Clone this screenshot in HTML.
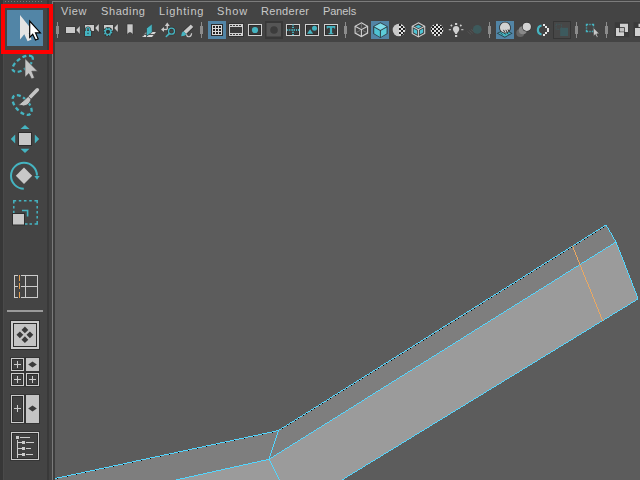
<!DOCTYPE html>
<html><head><meta charset="utf-8">
<style>
html,body{margin:0;padding:0;width:640px;height:480px;overflow:hidden;background:#444444;}
body{position:relative;font-family:"Liberation Sans",sans-serif;}
svg{position:absolute;left:0;top:0;}
.m{position:absolute;top:3px;font-size:11px;color:#c8c8c8;white-space:nowrap;line-height:16px;letter-spacing:0.6px;}
</style></head><body>
<svg width="640" height="480" viewBox="0 0 640 480">
  <!-- left toolbox -->
  <rect x="0" y="0" width="3" height="480" fill="#373737"/>
  <rect x="3" y="0" width="1" height="480" fill="#4a4a4a"/>
  <rect x="47" y="0" width="2" height="480" fill="#393939"/><rect x="49" y="0" width="3" height="480" fill="#434343"/><rect x="53" y="2" width="2" height="478" fill="#3d3d3d"/>
  <rect x="52" y="1" width="1" height="479" fill="#7a7a7a"/>
  <!-- top panel border -->
  <rect x="52" y="1" width="588" height="1" fill="#7c7c7c"/>
  <!-- dots on toolbox top -->
  <g fill="#7a7a7a">
    <rect x="5" y="1" width="1" height="1"/><rect x="8" y="1" width="1" height="1"/><rect x="11" y="1" width="1" height="1"/>
    <rect x="14" y="1" width="1" height="1"/><rect x="17" y="1" width="1" height="1"/><rect x="20" y="1" width="1" height="1"/>
    <rect x="23" y="1" width="1" height="1"/><rect x="26" y="1" width="1" height="1"/><rect x="29" y="1" width="1" height="1"/>
    <rect x="32" y="1" width="1" height="1"/><rect x="35" y="1" width="1" height="1"/><rect x="38" y="1" width="1" height="1"/>
    <rect x="41" y="1" width="1" height="1"/>
  </g>

  <!-- viewport -->
  <rect x="55" y="42" width="585" height="438" fill="#5c5c5c"/>

  <!-- geometry -->
  <g>
    <polygon points="278.5,430.5 606,225 616,242 269,459.3" fill="#7e7e7e"/>
    <polygon points="269,459.3 616,242 637.8,297.8 637.5,299.3 340.9,480.6 340.2,481 280.3,481" fill="#9b9b9b"/>
    <polygon points="55,478.5 278.5,430.5 269,459.3 171.4,481 55,481" fill="#7e7e7e"/>
    <polygon points="269,459.3 280.3,481 171.4,481" fill="#9b9b9b"/>
  </g>
  <path fill="#52d6ff" shape-rendering="crispEdges" d="M604 225h3v1h-3zM603 226h1v1h-1zM606 226h1v1h-1zM601 227h2v1h-2zM607 227h1v1h-1zM600 228h1v1h-1zM608 228h1v1h-1zM598 229h2v1h-2zM608 229h1v1h-1zM596 230h2v1h-2zM609 230h1v1h-1zM595 231h1v1h-1zM609 231h1v1h-1zM593 232h2v1h-2zM610 232h1v1h-1zM592 233h1v1h-1zM611 233h1v1h-1zM590 234h2v1h-2zM611 234h1v1h-1zM588 235h2v1h-2zM612 235h1v1h-1zM587 236h1v1h-1zM612 236h1v1h-1zM585 237h2v1h-2zM613 237h1v1h-1zM584 238h1v1h-1zM613 238h1v1h-1zM582 239h2v1h-2zM614 239h1v1h-1zM581 240h1v1h-1zM615 240h1v1h-1zM579 241h2v1h-2zM615 241h1v1h-1zM577 242h2v1h-2zM614 242h3v1h-3zM576 243h1v1h-1zM613 243h1v1h-1zM616 243h1v1h-1zM574 244h2v1h-2zM611 244h2v1h-2zM616 244h1v1h-1zM573 245h1v1h-1zM610 245h1v1h-1zM617 245h1v1h-1zM571 246h1v1h-1zM608 246h2v1h-2zM617 246h1v1h-1zM569 247h2v1h-2zM606 247h2v1h-2zM618 247h1v1h-1zM568 248h1v1h-1zM605 248h1v1h-1zM618 248h1v1h-1zM566 249h2v1h-2zM603 249h2v1h-2zM618 249h1v1h-1zM565 250h1v1h-1zM602 250h1v1h-1zM619 250h1v1h-1zM563 251h2v1h-2zM600 251h2v1h-2zM619 251h1v1h-1zM561 252h2v1h-2zM598 252h2v1h-2zM620 252h1v1h-1zM560 253h1v1h-1zM597 253h1v1h-1zM620 253h1v1h-1zM558 254h2v1h-2zM595 254h2v1h-2zM620 254h1v1h-1zM557 255h1v1h-1zM594 255h1v1h-1zM621 255h1v1h-1zM555 256h2v1h-2zM592 256h2v1h-2zM621 256h1v1h-1zM553 257h2v1h-2zM590 257h2v1h-2zM622 257h1v1h-1zM552 258h1v1h-1zM589 258h1v1h-1zM622 258h1v1h-1zM550 259h2v1h-2zM587 259h2v1h-2zM622 259h1v1h-1zM549 260h1v1h-1zM586 260h1v1h-1zM623 260h1v1h-1zM547 261h2v1h-2zM584 261h2v1h-2zM623 261h1v1h-1zM545 262h2v1h-2zM582 262h2v1h-2zM624 262h1v1h-1zM544 263h1v1h-1zM581 263h1v1h-1zM624 263h1v1h-1zM542 264h2v1h-2zM580 264h1v1h-1zM624 264h1v1h-1zM541 265h1v1h-1zM578 265h1v1h-1zM625 265h1v1h-1zM539 266h2v1h-2zM576 266h2v1h-2zM625 266h1v1h-1zM537 267h2v1h-2zM574 267h2v1h-2zM625 267h1v1h-1zM536 268h1v1h-1zM573 268h1v1h-1zM626 268h1v1h-1zM534 269h2v1h-2zM571 269h2v1h-2zM626 269h1v1h-1zM533 270h1v1h-1zM570 270h1v1h-1zM627 270h1v1h-1zM531 271h2v1h-2zM568 271h2v1h-2zM627 271h1v1h-1zM530 272h1v1h-1zM566 272h2v1h-2zM627 272h1v1h-1zM528 273h2v1h-2zM565 273h1v1h-1zM628 273h1v1h-1zM526 274h2v1h-2zM563 274h2v1h-2zM628 274h1v1h-1zM525 275h1v1h-1zM562 275h1v1h-1zM629 275h1v1h-1zM523 276h2v1h-2zM560 276h2v1h-2zM629 276h1v1h-1zM522 277h1v1h-1zM559 277h1v1h-1zM629 277h1v1h-1zM520 278h2v1h-2zM557 278h2v1h-2zM630 278h1v1h-1zM518 279h2v1h-2zM555 279h2v1h-2zM630 279h1v1h-1zM517 280h1v1h-1zM554 280h1v1h-1zM631 280h1v1h-1zM515 281h2v1h-2zM552 281h2v1h-2zM631 281h1v1h-1zM514 282h1v1h-1zM551 282h1v1h-1zM631 282h1v1h-1zM512 283h2v1h-2zM549 283h2v1h-2zM632 283h1v1h-1zM510 284h2v1h-2zM547 284h2v1h-2zM632 284h1v1h-1zM509 285h1v1h-1zM546 285h1v1h-1zM632 285h1v1h-1zM507 286h2v1h-2zM544 286h2v1h-2zM633 286h1v1h-1zM506 287h1v1h-1zM543 287h1v1h-1zM633 287h1v1h-1zM504 288h2v1h-2zM541 288h2v1h-2zM634 288h1v1h-1zM502 289h2v1h-2zM539 289h2v1h-2zM634 289h1v1h-1zM501 290h1v1h-1zM538 290h1v1h-1zM634 290h1v1h-1zM499 291h2v1h-2zM536 291h2v1h-2zM635 291h1v1h-1zM498 292h1v1h-1zM535 292h1v1h-1zM635 292h1v1h-1zM496 293h2v1h-2zM533 293h2v1h-2zM636 293h1v1h-1zM494 294h2v1h-2zM531 294h2v1h-2zM636 294h1v1h-1zM493 295h1v1h-1zM530 295h1v1h-1zM636 295h1v1h-1zM491 296h2v1h-2zM528 296h2v1h-2zM637 296h1v1h-1zM490 297h1v1h-1zM527 297h1v1h-1zM637 297h1v1h-1zM488 298h2v1h-2zM525 298h2v1h-2zM637 298h1v1h-1zM486 299h2v1h-2zM523 299h2v1h-2zM636 299h2v1h-2zM485 300h1v1h-1zM522 300h1v1h-1zM635 300h1v1h-1zM483 301h2v1h-2zM520 301h2v1h-2zM633 301h2v1h-2zM482 302h1v1h-1zM519 302h1v1h-1zM631 302h2v1h-2zM480 303h2v1h-2zM517 303h2v1h-2zM630 303h1v1h-1zM479 304h1v1h-1zM515 304h2v1h-2zM628 304h2v1h-2zM477 305h2v1h-2zM514 305h1v1h-1zM627 305h1v1h-1zM475 306h2v1h-2zM512 306h2v1h-2zM625 306h2v1h-2zM474 307h1v1h-1zM511 307h1v1h-1zM623 307h2v1h-2zM472 308h2v1h-2zM509 308h2v1h-2zM622 308h1v1h-1zM471 309h1v1h-1zM507 309h2v1h-2zM620 309h2v1h-2zM469 310h2v1h-2zM506 310h1v1h-1zM618 310h2v1h-2zM467 311h2v1h-2zM504 311h2v1h-2zM617 311h1v1h-1zM466 312h1v1h-1zM503 312h1v1h-1zM615 312h2v1h-2zM464 313h2v1h-2zM501 313h2v1h-2zM613 313h2v1h-2zM463 314h1v1h-1zM499 314h2v1h-2zM612 314h1v1h-1zM461 315h2v1h-2zM498 315h1v1h-1zM610 315h2v1h-2zM459 316h2v1h-2zM496 316h2v1h-2zM609 316h1v1h-1zM458 317h1v1h-1zM495 317h1v1h-1zM607 317h2v1h-2zM456 318h2v1h-2zM493 318h2v1h-2zM605 318h2v1h-2zM455 319h1v1h-1zM491 319h2v1h-2zM604 319h1v1h-1zM453 320h2v1h-2zM490 320h1v1h-1zM603 320h1v1h-1zM451 321h2v1h-2zM488 321h2v1h-2zM600 321h2v1h-2zM450 322h1v1h-1zM487 322h1v1h-1zM599 322h1v1h-1zM448 323h2v1h-2zM485 323h2v1h-2zM597 323h2v1h-2zM447 324h1v1h-1zM483 324h2v1h-2zM595 324h2v1h-2zM445 325h2v1h-2zM482 325h1v1h-1zM594 325h1v1h-1zM443 326h2v1h-2zM480 326h2v1h-2zM592 326h2v1h-2zM442 327h1v1h-1zM479 327h1v1h-1zM591 327h1v1h-1zM440 328h2v1h-2zM477 328h2v1h-2zM589 328h2v1h-2zM439 329h1v1h-1zM475 329h2v1h-2zM587 329h2v1h-2zM437 330h2v1h-2zM474 330h1v1h-1zM586 330h1v1h-1zM435 331h2v1h-2zM472 331h2v1h-2zM584 331h2v1h-2zM434 332h1v1h-1zM471 332h1v1h-1zM582 332h2v1h-2zM432 333h2v1h-2zM469 333h2v1h-2zM581 333h1v1h-1zM431 334h1v1h-1zM467 334h2v1h-2zM579 334h2v1h-2zM429 335h2v1h-2zM466 335h1v1h-1zM577 335h2v1h-2zM428 336h1v1h-1zM464 336h2v1h-2zM576 336h1v1h-1zM426 337h2v1h-2zM463 337h1v1h-1zM574 337h2v1h-2zM424 338h2v1h-2zM461 338h2v1h-2zM573 338h1v1h-1zM423 339h1v1h-1zM460 339h1v1h-1zM571 339h2v1h-2zM421 340h2v1h-2zM458 340h2v1h-2zM569 340h2v1h-2zM420 341h1v1h-1zM456 341h2v1h-2zM568 341h1v1h-1zM418 342h2v1h-2zM455 342h1v1h-1zM566 342h2v1h-2zM416 343h2v1h-2zM453 343h2v1h-2zM564 343h2v1h-2zM415 344h1v1h-1zM452 344h1v1h-1zM563 344h1v1h-1zM413 345h2v1h-2zM450 345h2v1h-2zM561 345h2v1h-2zM412 346h1v1h-1zM448 346h2v1h-2zM559 346h2v1h-2zM410 347h2v1h-2zM447 347h1v1h-1zM558 347h1v1h-1zM408 348h2v1h-2zM445 348h2v1h-2zM556 348h2v1h-2zM407 349h1v1h-1zM444 349h1v1h-1zM555 349h1v1h-1zM405 350h2v1h-2zM442 350h2v1h-2zM553 350h2v1h-2zM404 351h1v1h-1zM440 351h2v1h-2zM551 351h2v1h-2zM402 352h2v1h-2zM439 352h1v1h-1zM550 352h1v1h-1zM400 353h2v1h-2zM437 353h2v1h-2zM548 353h2v1h-2zM399 354h1v1h-1zM436 354h1v1h-1zM546 354h2v1h-2zM397 355h2v1h-2zM434 355h2v1h-2zM545 355h1v1h-1zM396 356h1v1h-1zM432 356h2v1h-2zM543 356h2v1h-2zM394 357h2v1h-2zM431 357h1v1h-1zM541 357h2v1h-2zM392 358h2v1h-2zM429 358h2v1h-2zM540 358h1v1h-1zM391 359h1v1h-1zM428 359h1v1h-1zM538 359h2v1h-2zM389 360h2v1h-2zM426 360h2v1h-2zM537 360h1v1h-1zM388 361h1v1h-1zM424 361h2v1h-2zM535 361h2v1h-2zM386 362h2v1h-2zM423 362h1v1h-1zM533 362h2v1h-2zM384 363h2v1h-2zM421 363h2v1h-2zM532 363h1v1h-1zM383 364h1v1h-1zM420 364h1v1h-1zM530 364h2v1h-2zM381 365h2v1h-2zM418 365h2v1h-2zM528 365h2v1h-2zM380 366h1v1h-1zM416 366h2v1h-2zM527 366h1v1h-1zM378 367h2v1h-2zM415 367h1v1h-1zM525 367h2v1h-2zM377 368h1v1h-1zM413 368h2v1h-2zM523 368h2v1h-2zM375 369h2v1h-2zM412 369h1v1h-1zM522 369h1v1h-1zM373 370h2v1h-2zM410 370h2v1h-2zM520 370h2v1h-2zM372 371h1v1h-1zM408 371h2v1h-2zM519 371h1v1h-1zM370 372h2v1h-2zM407 372h1v1h-1zM517 372h2v1h-2zM369 373h1v1h-1zM405 373h2v1h-2zM515 373h2v1h-2zM367 374h2v1h-2zM404 374h1v1h-1zM514 374h1v1h-1zM365 375h2v1h-2zM402 375h2v1h-2zM512 375h2v1h-2zM364 376h1v1h-1zM400 376h2v1h-2zM510 376h2v1h-2zM362 377h2v1h-2zM399 377h1v1h-1zM509 377h1v1h-1zM361 378h1v1h-1zM397 378h2v1h-2zM507 378h2v1h-2zM359 379h2v1h-2zM396 379h1v1h-1zM505 379h2v1h-2zM357 380h2v1h-2zM394 380h2v1h-2zM504 380h1v1h-1zM356 381h1v1h-1zM392 381h2v1h-2zM502 381h2v1h-2zM354 382h2v1h-2zM391 382h1v1h-1zM501 382h1v1h-1zM353 383h1v1h-1zM389 383h2v1h-2zM499 383h2v1h-2zM351 384h2v1h-2zM388 384h1v1h-1zM497 384h2v1h-2zM349 385h2v1h-2zM386 385h2v1h-2zM496 385h1v1h-1zM348 386h1v1h-1zM384 386h2v1h-2zM494 386h2v1h-2zM346 387h2v1h-2zM383 387h1v1h-1zM492 387h2v1h-2zM345 388h1v1h-1zM381 388h2v1h-2zM491 388h1v1h-1zM343 389h2v1h-2zM380 389h1v1h-1zM489 389h2v1h-2zM341 390h2v1h-2zM378 390h2v1h-2zM487 390h2v1h-2zM340 391h1v1h-1zM376 391h2v1h-2zM486 391h1v1h-1zM338 392h2v1h-2zM375 392h1v1h-1zM484 392h2v1h-2zM337 393h1v1h-1zM373 393h2v1h-2zM483 393h1v1h-1zM335 394h2v1h-2zM372 394h1v1h-1zM481 394h2v1h-2zM333 395h2v1h-2zM370 395h2v1h-2zM479 395h2v1h-2zM332 396h1v1h-1zM368 396h2v1h-2zM478 396h1v1h-1zM330 397h2v1h-2zM367 397h1v1h-1zM476 397h2v1h-2zM329 398h1v1h-1zM365 398h2v1h-2zM474 398h2v1h-2zM327 399h2v1h-2zM364 399h1v1h-1zM473 399h1v1h-1zM326 400h1v1h-1zM362 400h2v1h-2zM471 400h2v1h-2zM324 401h2v1h-2zM361 401h1v1h-1zM469 401h2v1h-2zM322 402h2v1h-2zM359 402h2v1h-2zM468 402h1v1h-1zM321 403h1v1h-1zM357 403h2v1h-2zM466 403h2v1h-2zM319 404h2v1h-2zM356 404h1v1h-1zM465 404h1v1h-1zM318 405h1v1h-1zM354 405h2v1h-2zM463 405h2v1h-2zM316 406h2v1h-2zM353 406h1v1h-1zM461 406h2v1h-2zM314 407h2v1h-2zM351 407h2v1h-2zM460 407h1v1h-1zM313 408h1v1h-1zM349 408h2v1h-2zM458 408h2v1h-2zM311 409h2v1h-2zM348 409h1v1h-1zM456 409h2v1h-2zM310 410h1v1h-1zM346 410h2v1h-2zM455 410h1v1h-1zM308 411h2v1h-2zM345 411h1v1h-1zM453 411h2v1h-2zM306 412h2v1h-2zM343 412h2v1h-2zM451 412h2v1h-2zM305 413h1v1h-1zM341 413h2v1h-2zM450 413h1v1h-1zM303 414h2v1h-2zM340 414h1v1h-1zM448 414h2v1h-2zM302 415h1v1h-1zM338 415h2v1h-2zM447 415h1v1h-1zM300 416h2v1h-2zM337 416h1v1h-1zM445 416h2v1h-2zM298 417h2v1h-2zM335 417h2v1h-2zM443 417h2v1h-2zM297 418h1v1h-1zM333 418h2v1h-2zM442 418h1v1h-1zM295 419h2v1h-2zM332 419h1v1h-1zM440 419h2v1h-2zM294 420h1v1h-1zM330 420h2v1h-2zM438 420h2v1h-2zM292 421h2v1h-2zM329 421h1v1h-1zM437 421h1v1h-1zM290 422h2v1h-2zM327 422h2v1h-2zM435 422h2v1h-2zM289 423h1v1h-1zM325 423h2v1h-2zM433 423h2v1h-2zM287 424h2v1h-2zM324 424h1v1h-1zM432 424h1v1h-1zM286 425h1v1h-1zM322 425h2v1h-2zM430 425h2v1h-2zM284 426h2v1h-2zM321 426h1v1h-1zM429 426h1v1h-1zM282 427h2v1h-2zM319 427h2v1h-2zM427 427h2v1h-2zM281 428h1v1h-1zM317 428h2v1h-2zM425 428h2v1h-2zM279 429h2v1h-2zM316 429h1v1h-1zM424 429h1v1h-1zM276 430h3v1h-3zM314 430h2v1h-2zM422 430h2v1h-2zM272 431h4v1h-4zM278 431h1v1h-1zM313 431h1v1h-1zM420 431h2v1h-2zM267 432h5v1h-5zM277 432h1v1h-1zM311 432h2v1h-2zM419 432h1v1h-1zM262 433h5v1h-5zM277 433h1v1h-1zM309 433h2v1h-2zM417 433h2v1h-2zM258 434h4v1h-4zM277 434h1v1h-1zM308 434h1v1h-1zM415 434h2v1h-2zM253 435h5v1h-5zM276 435h1v1h-1zM306 435h2v1h-2zM414 435h1v1h-1zM248 436h5v1h-5zM276 436h1v1h-1zM305 436h1v1h-1zM412 436h2v1h-2zM244 437h4v1h-4zM276 437h1v1h-1zM303 437h2v1h-2zM411 437h1v1h-1zM239 438h5v1h-5zM275 438h1v1h-1zM301 438h2v1h-2zM409 438h2v1h-2zM234 439h5v1h-5zM275 439h1v1h-1zM300 439h1v1h-1zM407 439h2v1h-2zM230 440h4v1h-4zM275 440h1v1h-1zM298 440h2v1h-2zM406 440h1v1h-1zM225 441h5v1h-5zM274 441h1v1h-1zM297 441h1v1h-1zM404 441h2v1h-2zM220 442h5v1h-5zM274 442h1v1h-1zM295 442h2v1h-2zM402 442h2v1h-2zM216 443h4v1h-4zM274 443h1v1h-1zM293 443h2v1h-2zM401 443h1v1h-1zM211 444h5v1h-5zM273 444h1v1h-1zM292 444h1v1h-1zM399 444h2v1h-2zM206 445h5v1h-5zM273 445h1v1h-1zM290 445h2v1h-2zM398 445h1v1h-1zM202 446h4v1h-4zM273 446h1v1h-1zM289 446h1v1h-1zM396 446h2v1h-2zM197 447h5v1h-5zM272 447h1v1h-1zM287 447h2v1h-2zM394 447h2v1h-2zM192 448h5v1h-5zM272 448h1v1h-1zM285 448h2v1h-2zM393 448h1v1h-1zM188 449h4v1h-4zM272 449h1v1h-1zM284 449h1v1h-1zM391 449h2v1h-2zM183 450h5v1h-5zM271 450h1v1h-1zM282 450h2v1h-2zM389 450h2v1h-2zM178 451h5v1h-5zM271 451h1v1h-1zM281 451h1v1h-1zM388 451h1v1h-1zM174 452h4v1h-4zM271 452h1v1h-1zM279 452h2v1h-2zM386 452h2v1h-2zM169 453h5v1h-5zM270 453h1v1h-1zM277 453h2v1h-2zM384 453h2v1h-2zM164 454h5v1h-5zM270 454h1v1h-1zM276 454h1v1h-1zM383 454h1v1h-1zM160 455h4v1h-4zM270 455h1v1h-1zM274 455h2v1h-2zM381 455h2v1h-2zM155 456h5v1h-5zM269 456h1v1h-1zM273 456h1v1h-1zM380 456h1v1h-1zM150 457h5v1h-5zM269 457h1v1h-1zM271 457h2v1h-2zM378 457h2v1h-2zM146 458h4v1h-4zM269 458h2v1h-2zM376 458h2v1h-2zM141 459h5v1h-5zM266 459h4v1h-4zM375 459h1v1h-1zM136 460h5v1h-5zM261 460h5v1h-5zM269 460h1v1h-1zM373 460h2v1h-2zM132 461h4v1h-4zM257 461h4v1h-4zM270 461h1v1h-1zM371 461h2v1h-2zM127 462h5v1h-5zM252 462h5v1h-5zM270 462h1v1h-1zM370 462h1v1h-1zM123 463h4v1h-4zM248 463h4v1h-4zM271 463h1v1h-1zM368 463h2v1h-2zM118 464h5v1h-5zM243 464h5v1h-5zM271 464h1v1h-1zM366 464h2v1h-2zM113 465h5v1h-5zM239 465h4v1h-4zM272 465h1v1h-1zM365 465h1v1h-1zM109 466h4v1h-4zM234 466h5v1h-5zM272 466h1v1h-1zM363 466h2v1h-2zM104 467h5v1h-5zM230 467h4v1h-4zM273 467h1v1h-1zM362 467h1v1h-1zM99 468h5v1h-5zM225 468h5v1h-5zM273 468h1v1h-1zM360 468h2v1h-2zM95 469h4v1h-4zM221 469h4v1h-4zM274 469h1v1h-1zM358 469h2v1h-2zM90 470h5v1h-5zM216 470h5v1h-5zM274 470h1v1h-1zM357 470h1v1h-1zM85 471h5v1h-5zM212 471h4v1h-4zM275 471h1v1h-1zM355 471h2v1h-2zM81 472h4v1h-4zM207 472h5v1h-5zM275 472h1v1h-1zM353 472h2v1h-2zM76 473h5v1h-5zM203 473h4v1h-4zM276 473h1v1h-1zM352 473h1v1h-1zM71 474h5v1h-5zM198 474h5v1h-5zM276 474h1v1h-1zM350 474h2v1h-2zM67 475h4v1h-4zM194 475h4v1h-4zM277 475h1v1h-1zM348 475h2v1h-2zM62 476h5v1h-5zM189 476h5v1h-5zM277 476h1v1h-1zM347 476h1v1h-1zM57 477h5v1h-5zM185 477h4v1h-4zM278 477h1v1h-1zM345 477h2v1h-2zM55 478h2v1h-2zM180 478h5v1h-5zM278 478h1v1h-1zM344 478h1v1h-1zM176 479h4v1h-4zM279 479h1v1h-1zM342 479h2v1h-2z"/>
  <path fill="#000000" shape-rendering="crispEdges" d="M603 227h1v1h-1zM600 229h1v1h-1zM595 232h1v1h-1zM592 234h1v1h-1zM587 237h1v1h-1zM584 239h1v1h-1zM579 242h1v1h-1zM576 244h1v1h-1zM571 247h1v1h-1zM568 249h1v1h-1zM563 252h1v1h-1zM560 254h1v1h-1zM555 257h1v1h-1zM552 259h1v1h-1zM547 262h1v1h-1zM544 264h1v1h-1zM539 267h1v1h-1zM536 269h1v1h-1zM531 272h1v1h-1zM528 274h1v1h-1zM523 277h1v1h-1zM520 279h1v1h-1zM515 282h1v1h-1zM512 284h1v1h-1zM507 287h1v1h-1zM504 289h1v1h-1zM499 292h1v1h-1zM496 294h1v1h-1zM491 297h1v1h-1zM488 299h1v1h-1zM482 303h1v1h-1zM479 305h1v1h-1zM474 308h1v1h-1zM471 310h1v1h-1zM466 313h1v1h-1zM463 315h1v1h-1zM458 318h1v1h-1zM455 320h1v1h-1zM450 323h1v1h-1zM447 325h1v1h-1zM442 328h1v1h-1zM439 330h1v1h-1zM434 333h1v1h-1zM431 335h1v1h-1zM426 338h1v1h-1zM423 340h1v1h-1zM418 343h1v1h-1zM415 345h1v1h-1zM410 348h1v1h-1zM407 350h1v1h-1zM402 353h1v1h-1zM399 355h1v1h-1zM394 358h1v1h-1zM391 360h1v1h-1zM386 363h1v1h-1zM383 365h1v1h-1zM378 368h1v1h-1zM375 370h1v1h-1zM370 373h1v1h-1zM367 375h1v1h-1zM362 378h1v1h-1zM359 380h1v1h-1zM354 383h1v1h-1zM351 385h1v1h-1zM346 388h1v1h-1zM343 390h1v1h-1zM338 393h1v1h-1zM335 395h1v1h-1zM330 398h1v1h-1zM327 400h1v1h-1zM322 403h1v1h-1zM319 405h1v1h-1zM314 408h1v1h-1zM311 410h1v1h-1zM306 413h1v1h-1zM303 415h1v1h-1zM298 418h1v1h-1zM295 420h1v1h-1zM290 423h1v1h-1zM287 425h1v1h-1zM282 428h1v1h-1zM272 432h1v1h-1zM262 434h1v1h-1zM253 436h1v1h-1zM244 438h1v1h-1zM234 440h1v1h-1zM225 442h1v1h-1zM216 444h1v1h-1zM206 446h1v1h-1zM197 448h1v1h-1zM188 450h1v1h-1zM178 452h1v1h-1zM169 454h1v1h-1zM160 456h1v1h-1zM150 458h1v1h-1zM141 460h1v1h-1zM132 462h1v1h-1zM123 464h1v1h-1zM113 466h1v1h-1zM104 468h1v1h-1zM95 470h1v1h-1zM85 472h1v1h-1zM76 474h1v1h-1zM67 476h1v1h-1zM57 478h1v1h-1z"/>
  <path fill="#eaa862" shape-rendering="crispEdges" d="M572 246h1v1h-1zM573 247h1v1h-1zM573 248h1v1h-1zM573 249h1v1h-1zM574 250h1v1h-1zM574 251h1v1h-1zM575 252h1v1h-1zM575 253h1v1h-1zM575 254h1v1h-1zM576 255h1v1h-1zM576 256h1v1h-1zM577 257h1v1h-1zM577 258h1v1h-1zM577 259h1v1h-1zM578 260h1v1h-1zM578 261h1v1h-1zM579 262h1v1h-1zM579 263h1v1h-1zM579 264h1v1h-1zM580 265h1v1h-1zM580 266h1v1h-1zM581 267h1v1h-1zM581 268h1v1h-1zM581 269h1v1h-1zM582 270h1v1h-1zM582 271h1v1h-1zM583 272h1v1h-1zM583 273h1v1h-1zM583 274h1v1h-1zM584 275h1v1h-1zM584 276h1v1h-1zM585 277h1v1h-1zM585 278h1v1h-1zM585 279h1v1h-1zM586 280h1v1h-1zM586 281h1v1h-1zM587 282h1v1h-1zM587 283h1v1h-1zM588 284h1v1h-1zM588 285h1v1h-1zM588 286h1v1h-1zM589 287h1v1h-1zM589 288h1v1h-1zM590 289h1v1h-1zM590 290h1v1h-1zM590 291h1v1h-1zM591 292h1v1h-1zM591 293h1v1h-1zM592 294h1v1h-1zM592 295h1v1h-1zM592 296h1v1h-1zM593 297h1v1h-1zM593 298h1v1h-1zM594 299h1v1h-1zM594 300h1v1h-1zM594 301h1v1h-1zM595 302h1v1h-1zM595 303h1v1h-1zM596 304h1v1h-1zM596 305h1v1h-1zM596 306h1v1h-1zM597 307h1v1h-1zM597 308h1v1h-1zM598 309h1v1h-1zM598 310h1v1h-1zM598 311h1v1h-1zM599 312h1v1h-1zM599 313h1v1h-1zM600 314h1v1h-1zM600 315h1v1h-1zM600 316h1v1h-1zM601 317h1v1h-1zM601 318h1v1h-1zM602 319h1v1h-1zM602 320h1v1h-1z"/>

  <!-- red selection box -->
  <rect x="3" y="6" width="48" height="46" fill="none" stroke="#ff0000" stroke-width="4"/>
  <rect x="7" y="10" width="36" height="36" fill="#5285a6"/>

  <!-- ===== left toolbox icons ===== -->
  <!-- select tool icon arrow -->
  <path d="M20,15 L20,39.5 L24.3,34.3 L27.6,41.3 L31.5,39.6 L28.6,33 L34.5,33 Z" fill="#e4e4e4"/>
  <!-- mouse cursor -->
  <path d="M29.7,21 L29.7,37.3 L32.7,34.3 L35.5,40.1 L38.2,39 L35.5,32.8 L40.4,32.8 Z" fill="#ffffff" stroke="#000000" stroke-width="1.15" stroke-linejoin="miter"/>

  <!-- lasso -->
  <ellipse cx="22.7" cy="63.7" rx="11.75" ry="5.6" transform="rotate(-35 22.7 63.7)" fill="none" stroke="#45b4c1" stroke-width="2.3" stroke-dasharray="4 2.6" stroke-dashoffset="1"/>
  <path d="M25,58.5 L25,77.2 L28.8,73.6 L31.6,79 L34.4,77.7 L31.8,71.2 L37.6,71.2 Z" fill="#c4c4c4" stroke="#444" stroke-width="0.6"/>

  <!-- paint select -->
  <ellipse cx="22.1" cy="105" rx="12.2" ry="6.4" transform="rotate(47 22.1 105)" fill="none" stroke="#45b4c1" stroke-width="2.3" stroke-dasharray="4 2.6"/>
  <line x1="37.3" y1="89.8" x2="30" y2="97.2" stroke="#444" stroke-width="6" stroke-linecap="round"/>
  <line x1="37.3" y1="89.8" x2="30" y2="97.2" stroke="#c4c4c4" stroke-width="3.6" stroke-linecap="round"/>
  <path d="M28.2,96.4 L31,99.2 C30.2,102.6 27.6,105.8 23.5,105.9 L18.4,104.9 C21.5,102.5 25,99.5 28.2,96.4 Z" fill="#c4c4c4" stroke="#444" stroke-width="0.9"/>

  <!-- move -->
  <rect x="18.5" y="132.5" width="13" height="13" fill="#c8c8c8" stroke="#2e2e2e" stroke-width="1"/>
  <g fill="#45b4c1">
    <polygon points="25,125 29.5,129 20.5,129"/>
    <polygon points="25,153 29.5,148.8 20.5,148.8"/>
    <polygon points="10.8,139 15.2,134.6 15.2,143.4"/>
    <polygon points="39.2,139 34.8,134.6 34.8,143.4"/>
  </g>

  <!-- rotate -->
  <path d="M23.8,188.8 A13,13 0 1 1 37,175.6" fill="none" stroke="#45b4c1" stroke-width="2"/>
  <polygon points="34.4,176 39.7,176 37,179.8" fill="#45b4c1"/>
  <polygon points="24,167.6 32.2,175.8 24,184 15.8,175.8" fill="#c8c8c8"/>

  <!-- scale -->
  <path d="M13.8,203.4 V200.8 H16.2 M18.8,200.8 H21.3 M23.9,200.8 H26.5 M29.2,200.8 H31.8 M34.4,200.8 H37.2 V203.3 M37.2,205.9 V208.6 M37.2,210.9 V213.6 M37.2,215.9 V218.6 M37.2,221 V224 H34.6 M32,224 H29.5 M27.5,224 H25 M13.8,205.9 V208.4 M13.8,210.8 V213" fill="none" stroke="#45b4c1" stroke-width="1.5"/>
  <polyline points="22,210.5 27.6,210.5 27.6,216.5" fill="none" stroke="#45b4c1" stroke-width="1.6"/>
  <rect x="12.5" y="213.5" width="12" height="11.5" fill="#c8c8c8" stroke="#2e2e2e" stroke-width="1"/>

  <!-- multi-cut -->
  <g fill="#cccccc" shape-rendering="crispEdges">
    <rect x="14" y="275" width="4" height="1"/><rect x="21" y="275" width="17" height="1"/>
    <rect x="14" y="297" width="4" height="1"/><rect x="21" y="297" width="17" height="1"/>
    <rect x="14" y="275" width="1" height="23"/><rect x="37" y="275" width="1" height="23"/>
    <rect x="25" y="275" width="1" height="23"/>
    <rect x="14" y="286" width="4" height="1"/><rect x="21" y="286" width="17" height="1"/>
  </g>
  <g fill="#e39e4e" shape-rendering="crispEdges">
    <rect x="19" y="275" width="1" height="6"/>
    <rect x="19" y="283" width="1" height="6"/>
    <rect x="19" y="292" width="1" height="6"/>
  </g>

  <!-- separator -->
  <rect x="7" y="310" width="36" height="2" fill="#9a9a9a"/>

  <!-- box with diamonds -->
  <g shape-rendering="crispEdges">
    <rect x="10" y="320" width="30" height="30" fill="#2e2e2e"/>
    <rect x="11" y="321" width="28" height="28" fill="#cccccc"/>
    <rect x="13" y="323" width="24" height="24" fill="#2e2e2e"/>
    <rect x="14" y="324" width="22" height="22" fill="#c4c4c4"/>
  </g>
  <g fill="#3a3a3a">
    <polygon points="24.9,326.5 28.299999999999997,329.9 24.9,333.29999999999995 21.5,329.9"/><polygon points="24.9,336.3 28.299999999999997,339.7 24.9,343.09999999999997 21.5,339.7"/><polygon points="19.9,331.40000000000003 23.299999999999997,334.8 19.9,338.2 16.5,334.8"/><polygon points="29.9,331.40000000000003 33.3,334.8 29.9,338.2 26.5,334.8"/>
  </g>

  <!-- 4 panes -->
  <g shape-rendering="crispEdges">
    <rect x="10" y="357" width="15" height="15" fill="#353535"/>
    <rect x="11" y="358" width="13" height="13" fill="#cccccc"/>
    <rect x="12" y="359" width="11" height="11" fill="#2e2e2e"/>
    <rect x="13" y="360" width="9" height="9" fill="#404040"/>
    <rect x="14" y="364" width="7" height="1" fill="#cccccc"/><rect x="17" y="361" width="1" height="7" fill="#cccccc"/>

    <rect x="25" y="357" width="15" height="15" fill="#353535"/>
    <rect x="26" y="358" width="13" height="13" fill="#c4c4c4"/>

    <rect x="10" y="372" width="15" height="15" fill="#353535"/>
    <rect x="11" y="373" width="13" height="13" fill="#cccccc"/>
    <rect x="12" y="374" width="11" height="11" fill="#2e2e2e"/>
    <rect x="13" y="375" width="9" height="9" fill="#404040"/>
    <rect x="14" y="379" width="7" height="1" fill="#cccccc"/><rect x="17" y="376" width="1" height="7" fill="#cccccc"/>

    <rect x="25" y="372" width="15" height="15" fill="#353535"/>
    <rect x="26" y="373" width="13" height="13" fill="#cccccc"/>
    <rect x="27" y="374" width="11" height="11" fill="#2e2e2e"/>
    <rect x="28" y="375" width="9" height="9" fill="#404040"/>
    <rect x="29" y="379" width="7" height="1" fill="#cccccc"/><rect x="32" y="376" width="1" height="7" fill="#cccccc"/>
  </g>
  <polygon points="32.5,361.5 36.8,364.5 32.5,367.5 28.2,364.5" fill="#3a3a3a"/>

  <!-- 2 panes -->
  <g shape-rendering="crispEdges">
    <rect x="10" y="394" width="15" height="30" fill="#353535"/>
    <rect x="11" y="395" width="13" height="28" fill="#cccccc"/>
    <rect x="12" y="396" width="11" height="26" fill="#2e2e2e"/>
    <rect x="13" y="397" width="9" height="24" fill="#404040"/>
    <rect x="14" y="408" width="7" height="1" fill="#cccccc"/><rect x="17" y="405" width="1" height="7" fill="#cccccc"/>
    <rect x="25" y="394" width="15" height="30" fill="#353535"/>
    <rect x="26" y="395" width="13" height="28" fill="#c4c4c4"/>
  </g>
  <polygon points="32.5,405.5 36.8,408.5 32.5,411.5 28.2,408.5" fill="#3a3a3a"/>

  <!-- outliner -->
  <g shape-rendering="crispEdges">
    <rect x="10" y="431" width="30" height="30" fill="#353535"/>
    <rect x="11" y="432" width="28" height="28" fill="#cccccc"/>
    <rect x="12" y="433" width="26" height="26" fill="#2e2e2e"/>
    <rect x="13" y="434" width="24" height="24" fill="#404040"/>
  </g>
  <g fill="#cccccc" shape-rendering="crispEdges">
    <rect x="16" y="436" width="3" height="3"/>
    <rect x="20" y="437" width="10" height="1"/>
    <rect x="17" y="440" width="1" height="18"/>
    <rect x="18" y="442" width="4" height="1"/><rect x="22" y="441" width="3" height="3"/><rect x="26" y="442" width="8" height="1"/>
    <rect x="18" y="448" width="4" height="1"/><rect x="22" y="447" width="3" height="3"/><rect x="26" y="448" width="5" height="1"/>
    <rect x="18" y="454" width="4" height="1"/><rect x="22" y="453" width="3" height="3"/><rect x="26" y="454" width="7" height="1"/>
  </g>

  <!-- ===== top toolbar ===== -->
  <g fill="#8c8c8c">
    <rect x="57" y="22" width="1" height="16"/><rect x="56" y="26" width="3" height="8"/>
    <rect x="201" y="22" width="1" height="16"/><rect x="200" y="26" width="3" height="8"/>
    <rect x="345" y="22" width="1" height="16"/><rect x="344" y="26" width="3" height="8"/>
    <rect x="489" y="22" width="1" height="16"/><rect x="488" y="26" width="3" height="8"/>
    <rect x="576" y="22" width="1" height="16"/><rect x="575" y="26" width="3" height="8"/>
    <rect x="606" y="22" width="1" height="16"/><rect x="605" y="26" width="3" height="8"/>
  </g>
  <!-- camera -->
  <rect x="65.5" y="26.5" width="10" height="7" fill="#333"/>
  <rect x="66" y="27" width="9" height="6" fill="#cacaca"/>
  <polygon points="75.6,30 80.2,25.4 80.2,34.6" fill="#333"/>
  <polygon points="76.2,30 79.8,26 79.8,34" fill="#cacaca"/>
  <!-- lock camera -->
  <rect x="84.5" y="24.5" width="10" height="7" fill="#333"/>
  <rect x="85" y="25" width="9" height="6" fill="#cacaca"/>
  <polygon points="94.6,28 99.2,23.4 99.2,32.6" fill="#333"/>
  <polygon points="95.2,28 98.8,24 98.8,32" fill="#cacaca"/>
  <path d="M86.4,31.5 V29.3 A1.6,1.6 0 0 1 89.6,29.3 V31.5" fill="none" stroke="#333" stroke-width="2.6"/>
  <rect x="84.3" y="30.3" width="7.4" height="6.4" fill="#333"/>
  <path d="M86.4,31.5 V29.3 A1.6,1.6 0 0 1 89.6,29.3 V31.5" fill="none" stroke="#45b4c1" stroke-width="1.3"/>
  <rect x="85" y="31" width="6" height="5" fill="#45b4c1"/>
  <rect x="87.3" y="32.7" width="1.4" height="1.4" fill="#2a5a60"/>
  <!-- gear camera -->
  <rect x="103.5" y="24.5" width="10" height="7" fill="#333"/>
  <rect x="104" y="25" width="9" height="6" fill="#cacaca"/>
  <polygon points="113.6,28 118.2,23.4 118.2,32.6" fill="#333"/>
  <polygon points="114.2,28 117.8,24 117.8,32" fill="#cacaca"/>
  <circle cx="108" cy="31.8" r="4.8" fill="#333"/>
  <circle cx="108" cy="31.8" r="3.5" fill="none" stroke="#45b4c1" stroke-width="1.6" stroke-dasharray="1.45 1.3"/>
  <circle cx="108" cy="31.8" r="2.7" fill="none" stroke="#45b4c1" stroke-width="1.2"/>
  <!-- bookmark -->
  <path d="M127,24 L133,24 L133,35 L131.5,33 Q130,31.8 128.5,33 L127,35 Z" fill="#c8c8c8" stroke="#333" stroke-width="0.6"/>
  <!-- image plane -->
  <polygon points="142,37 146,32 156,32 152,37" fill="#d8d8d8"/>
  <g stroke="#444" stroke-width="0.9" fill="none">
    <line x1="144.6" y1="34.5" x2="154" y2="34.5"/>
    <line x1="146.2" y1="32" x2="142.8" y2="36.5"/>
    <line x1="149.8" y1="32" x2="146.3" y2="36.8"/>
  </g>
  <polygon points="146.5,28.3 152.2,23.8 152.2,32.2 146.5,36.3" fill="#45b4c1" stroke="#333" stroke-width="0.6"/>
  <!-- move zoom -->
  <g fill="#cacaca">
    <polygon points="161,29.4 164,26.9 164,31.9"/>
    <rect x="163.5" y="28.8" width="5" height="1.3"/>
    <polygon points="167.25,22.6 164.8,25.9 169.7,25.9"/>
    <rect x="166.6" y="25.5" width="1.3" height="4.5"/>
  </g>
  <circle cx="171.5" cy="31.2" r="3" fill="none" stroke="#333" stroke-width="2.8"/>
  <circle cx="171.5" cy="31.2" r="3" fill="none" stroke="#45b4c1" stroke-width="1.3"/>
  <line x1="169.2" y1="33.6" x2="166.3" y2="36.5" stroke="#45b4c1" stroke-width="1.6" stroke-linecap="round"/>
  <!-- pencil -->
  <line x1="192" y1="25.8" x2="184.8" y2="32.6" stroke="#333" stroke-width="5.2"/>
  <line x1="192" y1="25.8" x2="184.8" y2="32.6" stroke="#cacaca" stroke-width="3.6"/>
  <path d="M183.3,31.3 L186.5,34.3 C185.5,35.6 183.5,36.3 181.3,36.3 C181.2,34.6 181.9,32.6 183.3,31.3 Z" fill="#45b4c1"/>
  <path d="M186.4,34.4 C187,37.6 191.2,37.8 191.6,33.2" fill="none" stroke="#cacaca" stroke-width="1.2"/>
  <!-- grid (selected) -->
  <rect x="208" y="21" width="18" height="18" fill="#5285a6"/>
  <rect x="211" y="24" width="12" height="12" fill="#2a2a2a"/>
  <rect x="212" y="25" width="10" height="10" fill="#d8d8d8"/>
  <g fill="#222">
    <rect x="213" y="26" width="2" height="2"/><rect x="216" y="26" width="2" height="2"/><rect x="219" y="26" width="2" height="2"/>
    <rect x="213" y="29" width="2" height="2"/><rect x="216" y="29" width="2" height="2"/><rect x="219" y="29" width="2" height="2"/>
    <rect x="213" y="32" width="2" height="2"/><rect x="216" y="32" width="2" height="2"/><rect x="219" y="32" width="2" height="2"/>
  </g>
  <!-- film gate -->
  <rect x="228.5" y="23.5" width="15" height="13" fill="#d2d2d2" stroke="#333" stroke-width="1"/>
  <rect x="230" y="27" width="12" height="6" fill="#3c3c3c"/>
  <g fill="#3c3c3c">
    <rect x="230" y="25" width="2" height="1"/><rect x="233" y="25" width="2" height="1"/><rect x="236" y="25" width="2" height="1"/><rect x="239" y="25" width="2" height="1"/>
    <rect x="230" y="34" width="2" height="1"/><rect x="233" y="34" width="2" height="1"/><rect x="236" y="34" width="2" height="1"/><rect x="239" y="34" width="2" height="1"/>
  </g>
  <!-- res gate -->
  <g shape-rendering="crispEdges"><rect x="248" y="24" width="14" height="12" fill="#d0d0d0"/><rect x="249" y="25" width="12" height="10" fill="#2c2c2c"/><rect x="250" y="26" width="10" height="8" fill="#3a3a3a"/></g>
  <circle cx="255" cy="30" r="3.1" fill="#45b4c1"/>
  <!-- gate mask (disabled) -->
  <rect x="265" y="21" width="18" height="18" fill="#383838"/>
  <rect x="266.5" y="23" width="14.5" height="13.5" fill="#555555"/>
  <circle cx="274" cy="30" r="3.8" fill="#3c3c3c"/>
  <!-- field chart -->
  <g shape-rendering="crispEdges"><rect x="286" y="24" width="14" height="12" fill="#d0d0d0"/><rect x="287" y="25" width="12" height="10" fill="#2c2c2c"/><rect x="288" y="26" width="10" height="8" fill="#3a3a3a"/></g>
  <g fill="#45b4c1">
    <rect x="292" y="24.6" width="2" height="1"/><rect x="292" y="26.8" width="2" height="1.2"/><rect x="292" y="31.7" width="2" height="1.2"/><rect x="292" y="34" width="2" height="1"/>
    <rect x="287.2" y="29" width="1" height="2"/><rect x="289.3" y="29" width="1" height="2"/><rect x="291.5" y="29" width="1.3" height="2"/>
    <rect x="293.6" y="29" width="1.3" height="2"/><rect x="296" y="29" width="1" height="2"/><rect x="298" y="29" width="1.2" height="2"/>
  </g>
  <!-- shapes -->
  <g shape-rendering="crispEdges"><rect x="305" y="24" width="14" height="12" fill="#d0d0d0"/><rect x="306" y="25" width="12" height="10" fill="#2c2c2c"/><rect x="307" y="26" width="10" height="8" fill="#3a3a3a"/></g>
  <polygon points="307,33.8 310.1,29.2 313.1,33.8" fill="#45b4c1"/>
  <circle cx="314.5" cy="28.2" r="2.5" fill="#45b4c1"/>
  <!-- T -->
  <g shape-rendering="crispEdges"><rect x="324" y="24" width="14" height="12" fill="#d0d0d0"/><rect x="325" y="25" width="12" height="10" fill="#2c2c2c"/><rect x="326" y="26" width="10" height="8" fill="#3a3a3a"/></g>
  <g fill="#45b4c1">
    <rect x="326.8" y="26" width="8.3" height="1.8"/>
    <rect x="326.8" y="26" width="1" height="2.6"/><rect x="334.1" y="26" width="1" height="2.6"/>
    <rect x="329.9" y="26" width="2.2" height="8"/>
    <rect x="328.6" y="33.2" width="4.8" height="1"/>
  </g>

  <!-- wireframe cube -->
  <g fill="none" stroke="#d0d0d0" stroke-width="1.1">
    <polygon points="361.4,22.8 367.6,26.3 367.6,33.1 361.4,36.6 355.1,33.1 355.1,26.3"/>
    <polyline points="355.1,26.3 361.4,29.7 367.6,26.3"/>
    <line x1="361.4" y1="29.7" x2="361.4" y2="36.6"/>
  </g>
  <g fill="none" stroke="#8a8a8a" stroke-width="0.7">
    <line x1="361.4" y1="23.5" x2="361.4" y2="28.5"/>
    <line x1="356" y1="32.5" x2="360" y2="30.5"/>
    <line x1="366.8" y1="32.5" x2="362.8" y2="30.5"/>
  </g>
  <!-- shaded cube selected -->
  <rect x="371" y="21" width="18" height="18" fill="#5285a6"/>
  <polygon points="380.4,22.2 387.6,26.3 387.6,33.8 380.4,38 373.2,33.8 373.2,26.3" fill="#2e3a40"/>
  <polygon points="380.4,23.2 386.6,26.6 380.4,30 374.2,26.6" fill="#7edbe8"/>
  <polygon points="374.2,27.5 379.9,30.8 379.9,36.9 374.2,33.5" fill="#4fc3d3"/>
  <polygon points="380.9,30.8 386.6,27.5 386.6,33.5 380.9,36.9" fill="#5ccbd9"/>
  <!-- half checker sphere -->
  <clipPath id="cs1"><circle cx="399" cy="30" r="6.3"/></clipPath>
  <g clip-path="url(#cs1)">
    <rect x="392" y="23" width="7" height="14" fill="#cacaca"/>
    <rect x="399" y="23" width="7" height="14" fill="#e0e0e0"/>
    <g fill="#1e1e1e">
      <rect x="399" y="24" width="2" height="2"/><rect x="401" y="26" width="2" height="2"/><rect x="399" y="28" width="2" height="2"/>
      <rect x="401" y="30" width="2" height="2"/><rect x="399" y="32" width="2" height="2"/><rect x="401" y="34" width="2" height="2"/>
      <rect x="403" y="24" width="2" height="2"/><rect x="403" y="28" width="2" height="2"/><rect x="403" y="32" width="2" height="2"/>
      <rect x="399" y="36" width="2" height="2"/><rect x="401" y="22" width="2" height="2"/><rect x="405" y="26" width="2" height="2"/><rect x="405" y="30" width="2" height="2"/><rect x="405" y="34" width="2" height="2"/>
    </g>
  </g>
  <!-- wire on shaded cube -->
  <polygon points="418.4,22.8 424.7,26.3 424.7,33.4 418.4,36.9 412.2,33.4 412.2,26.3" fill="#3a3a3a"/>
  <polygon points="418.4,24.9 421.7,26.6 418.4,28.2 415.1,26.6" fill="#4fc3d3"/>
  <polygon points="413.6,28.6 417,30.6 417,34.4 413.6,32.5" fill="#4fc3d3"/>
  <polygon points="419.8,30.6 423.2,28.6 423.2,32.5 419.8,34.4" fill="#4fc3d3"/>
  <g fill="none" stroke="#d0d0d0" stroke-width="1.1">
    <polygon points="418.4,22.8 424.7,26.3 424.7,33.4 418.4,36.9 412.2,33.4 412.2,26.3"/>
    <polyline points="412.2,26.3 418.4,29.7 424.7,26.3"/>
    <line x1="418.4" y1="29.7" x2="418.4" y2="36.9"/>
  </g>
  <!-- checker sphere -->
  <clipPath id="cs2"><circle cx="437" cy="30" r="6.3"/></clipPath>
  <g clip-path="url(#cs2)">
    <rect x="430" y="23" width="14" height="14" fill="#e0e0e0"/>
    <g fill="#1e1e1e">
      <rect x="430" y="24" width="2" height="2"/><rect x="434" y="24" width="2" height="2"/><rect x="438" y="24" width="2" height="2"/><rect x="442" y="24" width="2" height="2"/>
      <rect x="432" y="26" width="2" height="2"/><rect x="436" y="26" width="2" height="2"/><rect x="440" y="26" width="2" height="2"/>
      <rect x="430" y="28" width="2" height="2"/><rect x="434" y="28" width="2" height="2"/><rect x="438" y="28" width="2" height="2"/><rect x="442" y="28" width="2" height="2"/>
      <rect x="432" y="30" width="2" height="2"/><rect x="436" y="30" width="2" height="2"/><rect x="440" y="30" width="2" height="2"/>
      <rect x="430" y="32" width="2" height="2"/><rect x="434" y="32" width="2" height="2"/><rect x="438" y="32" width="2" height="2"/><rect x="442" y="32" width="2" height="2"/>
      <rect x="432" y="34" width="2" height="2"/><rect x="436" y="34" width="2" height="2"/><rect x="440" y="34" width="2" height="2"/>
      <rect x="432" y="22" width="2" height="2"/><rect x="436" y="22" width="2" height="2"/><rect x="440" y="22" width="2" height="2"/>
      <rect x="430" y="36" width="2" height="2"/><rect x="434" y="36" width="2" height="2"/><rect x="438" y="36" width="2" height="2"/>
    </g>
  </g>
  <!-- light bulb -->
  <g fill="#d0d0d0">
    <path d="M456.1,26 C458.2,26 459.3,27.6 459.3,29.3 C459.3,31 457.3,32.5 456.9,34 L455.3,34 C454.9,32.5 452.9,31 452.9,29.3 C452.9,27.6 454,26 456.1,26 Z"/>
    <rect x="455" y="35" width="2.2" height="2"/>
    <rect x="455" y="23" width="2.2" height="2"/>
    <polygon points="451.4,24.3 452.6,25.5 451.4,26.7 450.2,25.5"/>
    <polygon points="460.8,24.3 462,25.5 460.8,26.7 459.6,25.5"/>
    <rect x="448.8" y="29.2" width="2.2" height="1"/>
    <rect x="461.2" y="29.2" width="2.2" height="1"/>
  </g>
  <!-- shadows disabled -->
  <g stroke="#555" stroke-width="0.9">
    <line x1="467.5" y1="31.5" x2="471" y2="34.5"/>
    <line x1="469.3" y1="30.4" x2="472.8" y2="33.4"/>
    <line x1="471.1" y1="29.3" x2="474.6" y2="32.3"/>
  </g>
  <circle cx="477.3" cy="29.3" r="4.4" fill="#3d5a5c"/>
  <!-- AO selected -->
  <rect x="496" y="21" width="18" height="18" fill="#5285a6"/>
  <polygon points="496.6,33.3 504.8,29.3 512.6,33.3 504.8,37.8" fill="#2a3c44"/>
  <polygon points="498.2,33.3 504.8,30.2 511.1,33.3 504.8,36.7" fill="#45b4c1"/>
  <g stroke="#2a3c44" stroke-width="0.8">
    <line x1="500.5" y1="32.6" x2="502.6" y2="34.8"/>
    <line x1="503.5" y1="32.4" x2="505.6" y2="34.6"/>
    <line x1="506.5" y1="32.4" x2="508.6" y2="34.6"/>
  </g>
  <circle cx="505" cy="27.6" r="5.9" fill="#2e2e2e"/>
  <circle cx="505" cy="27.6" r="5.1" fill="#d2d2d2"/>
  <g stroke="#333" stroke-width="1" stroke-linecap="round">
    <line x1="503.6" y1="30.2" x2="504.6" y2="32"/>
    <line x1="506" y1="30.2" x2="507" y2="32"/>
    <line x1="508.2" y1="29.8" x2="509" y2="31.4"/>
  </g>
  <!-- motion blur -->
  <circle cx="520.3" cy="33" r="4" fill="#666"/>
  <circle cx="522.8" cy="30.2" r="4" fill="#888"/>
  <circle cx="526.8" cy="26.8" r="4.8" fill="#333"/>
  <circle cx="526.8" cy="26.8" r="4.1" fill="#d4d4d4"/>
  <!-- AA -->
  <path d="M541.54,25.5 A4.6,4.6 0 0 0 541.54,34.5" fill="none" stroke="#45b4c1" stroke-width="2.2"/>
  <g fill="#e8e8e8" shape-rendering="crispEdges">
    <rect x="543" y="24" width="2" height="2"/><rect x="545" y="26" width="2" height="2"/>
    <rect x="547" y="28" width="2" height="4"/>
    <rect x="545" y="32" width="2" height="2"/><rect x="543" y="34" width="2" height="2"/>
  </g>
  <!-- DOF disabled -->
  <rect x="553.5" y="21.5" width="17" height="17" fill="#474747" stroke="#363636" stroke-width="1"/>
  <rect x="556" y="24.3" width="5.5" height="5" fill="none" stroke="#3d5a5e" stroke-width="0.9" stroke-dasharray="1 0.6"/>
  <rect x="560.2" y="27.8" width="7.8" height="8.2" fill="#3d5a5e"/>
  <!-- select camera -->
  <path d="M586.5,26.2 V24.5 H593.5 V31.5 H586.5 Z" fill="none" stroke="#45b4c1" stroke-width="1.4" stroke-dasharray="3.4 1.2 1.2 1.2"/>
  <path d="M593.2,27.4 L593.4,36.4 L595.3,34.5 L596.8,37.6 L598.2,36.9 L596.8,33.9 L599.4,33.7 Z" fill="#c8c8c8" stroke="#383838" stroke-width="0.7"/>
  <!-- isolate -->
  <rect x="614.75" y="22.25" width="14.5" height="15" fill="#3a3a3a"/>
  <rect x="620" y="23.75" width="8" height="8.25" fill="#d0d0d0"/>
  <rect x="619.25" y="27.25" width="5.5" height="5.5" fill="#2a2a2a"/>
  <rect x="616" y="28" width="8" height="8" fill="#d0d0d0"/>
  <rect x="619.3" y="28" width="0.8" height="4.2" fill="#2a2a2a"/>
  <rect x="619.3" y="31.4" width="4.7" height="0.8" fill="#2a2a2a"/>
  <rect x="620.1" y="28" width="3.9" height="3.4" fill="#c0c0c0"/>
  <!-- partial next -->
  <rect x="633.5" y="22.25" width="7" height="15" fill="#3a3a3a"/>
  <rect x="635" y="28" width="6" height="8" fill="#d0d0d0"/>
  <rect x="638.5" y="23.75" width="2" height="3.2" fill="#d0d0d0"/>
</svg>
<div class="m" style="left:61px">View</div>
<div class="m" style="left:101px">Shading</div>
<div class="m" style="left:159px;letter-spacing:0.85px">Lighting</div>
<div class="m" style="left:217px;letter-spacing:0.9px">Show</div>
<div class="m" style="left:261px;letter-spacing:0.3px">Renderer</div>
<div class="m" style="left:323px;letter-spacing:-0.1px">Panels</div>
</body></html>
